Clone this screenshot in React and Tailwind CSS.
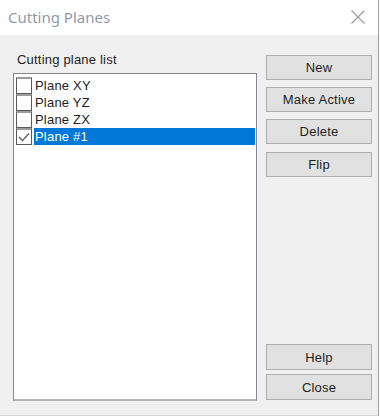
import { useState } from 'react'

const planes = [
  { name: 'Plane XY', checked: false },
  { name: 'Plane YZ', checked: false },
  { name: 'Plane ZX', checked: false },
  { name: 'Plane #1', checked: true },
]

function CheckBox({ checked }) {
  return (
    <div className="w-[16px] h-[17px] shrink-0 border border-[#5a5a5a] border-t-[#9c9c9c] border-t-2 bg-white flex items-center justify-center">
      {checked && (
        <svg width="12" height="10" viewBox="0 0 12 10" fill="none">
          <path d="M1 5 L4.5 8.5 L11 1.5" stroke="#5e5e5e" strokeWidth="1.3" />
        </svg>
      )}
    </div>
  )
}

function Button({ children, className = '' }) {
  return (
    <button className={`w-[106px] h-[25px] bg-[#e1e1e1] border border-[#adadad] text-[13px] text-[#1e1e1e] leading-none tracking-[0.2px] ${className}`}>
      {children}
    </button>
  )
}

export default function App() {
  const [selected] = useState(3)

  return (
    <div className="w-[379px] h-[416px] bg-white border-r border-r-[#a0a0a0] border-b border-b-[#d4d4d4] flex flex-col" style={{ fontFamily: '"Liberation Sans", Arial, sans-serif' }}>
      {/* Title bar */}
      <div className="h-[35px] bg-white flex items-center justify-between pl-[8px] pr-[13px]">
        <span className="text-[15px] text-[#8e9bab]" style={{ fontFamily: '"Noto Sans", "Open Sans", sans-serif' }}>
          Cutting Planes
        </span>
        <svg width="14" height="14" viewBox="0 0 14 14" className="mt-[-1px]">
          <path d="M0.5 0.5 L13.5 13.5 M13.5 0.5 L0.5 13.5" stroke="#9a9a9a" strokeWidth="1.1" />
        </svg>
      </div>

      {/* Body */}
      <div className="flex-1 bg-[#f0f0f0] flex">
        <div className="pl-[13px] pt-[17px] pb-[14px] flex flex-col">
          <div className="pl-[4px] text-[13px] leading-[16px] text-[#1e1e1e] tracking-[0.2px]">Cutting plane list</div>
          <div className="mt-[5px] w-[244px] flex-1 bg-white border border-[#828790] border-b-[#b4b4b4] border-b-2 pt-[3px] pl-[2px] pr-[1px]">
            {planes.map((p, i) => (
              <div key={p.name} className="flex items-stretch h-[17px]">
                <CheckBox checked={p.checked} />
                <div className={`flex-1 ml-[2px] pl-[1px] text-[13px] leading-[17px] tracking-[0.2px] ${i === selected ? 'bg-[#0078d7] text-white' : 'text-[#1e1e1e]'}`}>
                  {p.name}
                </div>
              </div>
            ))}
          </div>
        </div>

        <div className="ml-[9px] pt-[20px] pb-[15px] flex flex-col">
          <Button>New</Button>
          <Button className="mt-[7px]">Make Active</Button>
          <Button className="mt-[7px]">Delete</Button>
          <Button className="mt-[8px]">Flip</Button>
          <div className="mt-auto flex flex-col gap-[4px]">
            <Button className="h-[26px]">Help</Button>
            <Button className="h-[26px]">Close</Button>
          </div>
        </div>
      </div>
    </div>
  )
}
